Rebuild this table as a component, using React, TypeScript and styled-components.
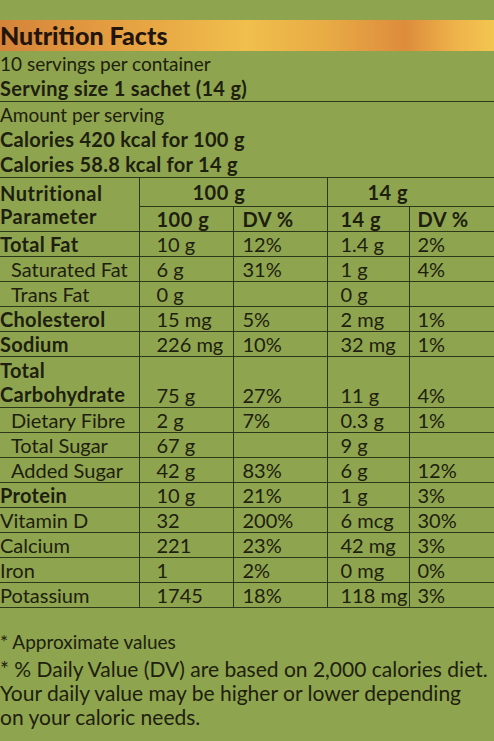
import React from "react";
import styled, { createGlobalStyle } from "styled-components";

const Global = createGlobalStyle`
  html, body { margin: 0; padding: 0; background: #8fa44e; }
  body { font-family: Lato, "Noto Sans", sans-serif; color: #1d200f; }
`;

const Page = styled.div`
  width: 494px;
  min-height: 741px;
  background: #8fa44e;
  padding-top: 20px;
  box-sizing: border-box;
  overflow: hidden;
`;

const TitleBand = styled.h1`
  margin: 0;
  height: 31px;
  line-height: 31px;
  font-size: 25px;
  font-weight: 900;
  color: #24150c;
  white-space: nowrap;
  background: linear-gradient(
    90deg,
    #d4843a 0%,
    #e39a40 20%,
    #f0bf4c 50%,
    #e8ab45 66%,
    #dd8c3c 82%,
    #eeb24a 92%,
    #f3c650 100%
  );
`;

const Line = styled.div<{ $bold?: boolean }>`
  height: 25px;
  line-height: 25px;
  font-size: ${(p) => (p.$bold ? 20 : 19)}px;
  letter-spacing: ${(p) => (p.$bold ? 0.3 : 0)}px;
  font-weight: ${(p) => (p.$bold ? 700 : 400)};
  white-space: nowrap;
`;

const Section = styled.div<{ $divider?: boolean }>`
  border-bottom: ${(p) => (p.$divider ? "1px solid #2d381a" : "none")};
`;

const Table = styled.table`
  width: 100%;
  border-collapse: collapse;
  table-layout: fixed;
  font-size: 20px;
  border-top: 1px solid #2d381a;
  border-bottom: 1px solid #2d381a;
`;

const Cell = styled.td<{ $bold?: boolean; $indent?: boolean; $pad?: number; $bottom?: boolean }>`
  height: 24px;
  padding: 0 0 0 ${(p) => (p.$indent ? 11 : p.$pad ?? 0)}px;
  line-height: 24px;
  font-weight: ${(p) => (p.$bold ? 700 : 400)};
  letter-spacing: ${(p) => (p.$bold ? 0.3 : 0)}px;
  border: 1px solid #2d381a;
  white-space: nowrap;
  overflow: visible;
  vertical-align: ${(p) => (p.$bottom ? "bottom" : "middle")};
  &:first-child { border-left: none; }
  &:last-child { border-right: none; }
`;

const HeadCell = styled.th<{ $pad?: number; $tall?: boolean }>`
  padding: 0 0 0 ${(p) => p.$pad ?? 0}px;
  height: ${(p) => (p.$tall ? 28 : 24)}px;
  font-weight: 700;
  letter-spacing: 0.5px;
  text-align: left;
  line-height: 23px;
  border: 1px solid #2d381a;
  vertical-align: middle;
  white-space: nowrap;
  &:first-child { border-left: none; }
  &:last-child { border-right: none; }
`;

const Footer = styled.div`
  padding-top: 22px;
  line-height: 24px;
`;

const Note = styled.p<{ $small?: boolean }>`
  margin: 0 0 3px 0;
  font-size: ${(p) => (p.$small ? 19 : 21)}px;
  white-space: nowrap;
`;

type Row = {
  name: string;
  v: [string, string, string, string];
  bold?: boolean;
  indent?: boolean;
  twoLine?: boolean;
};

const rows: Row[] = [
  { name: "Total Fat", v: ["10 g", "12%", "1.4 g", "2%"], bold: true },
  { name: "Saturated Fat", v: ["6 g", "31%", "1 g", "4%"], indent: true },
  { name: "Trans Fat", v: ["0 g", "", "0 g", ""], indent: true },
  { name: "Cholesterol", v: ["15 mg", "5%", "2 mg", "1%"], bold: true },
  { name: "Sodium", v: ["226 mg", "10%", "32 mg", "1%"], bold: true },
  { name: "Total Carbohydrate", v: ["75 g", "27%", "11 g", "4%"], bold: true, twoLine: true },
  { name: "Dietary Fibre", v: ["2 g", "7%", "0.3 g", "1%"], indent: true },
  { name: "Total Sugar", v: ["67 g", "", "9 g", ""], indent: true },
  { name: "Added Sugar", v: ["42 g", "83%", "6 g", "12%"], indent: true },
  { name: "Protein", v: ["10 g", "21%", "1 g", "3%"], bold: true },
  { name: "Vitamin D", v: ["32", "200%", "6 mcg", "30%"] },
  { name: "Calcium", v: ["221", "23%", "42 mg", "3%"] },
  { name: "Iron", v: ["1", "2%", "0 mg", "0%"] },
  { name: "Potassium", v: ["1745", "18%", "118 mg", "3%"] },
];

const pads = [17, 9, 13, 8];

export default function App() {
  return (
    <Page>
      <Global />
      <TitleBand>Nutrition Facts</TitleBand>
      <Section $divider>
        <Line>10 servings per container</Line>
        <Line $bold>Serving size 1 sachet (14 g)</Line>
      </Section>
      <Section>
        <Line>Amount per serving</Line>
        <Line $bold>Calories 420 kcal for 100 g</Line>
        <Line $bold>Calories 58.8 kcal for 14 g</Line>
      </Section>
      <Table>
        <colgroup>
          <col style={{ width: 139 }} />
          <col style={{ width: 94 }} />
          <col style={{ width: 94 }} />
          <col style={{ width: 82 }} />
          <col />
        </colgroup>
        <thead>
          <tr>
            <HeadCell rowSpan={2}>
              Nutritional
              <br />
              Parameter
            </HeadCell>
            <HeadCell colSpan={2} $pad={53} $tall>
              100 g
            </HeadCell>
            <HeadCell colSpan={2} $pad={40} $tall>
              14 g
            </HeadCell>
          </tr>
          <tr>
            <HeadCell $pad={pads[0]}>100 g</HeadCell>
            <HeadCell $pad={pads[1]}>DV %</HeadCell>
            <HeadCell $pad={pads[2]}>14 g</HeadCell>
            <HeadCell $pad={pads[3]}>DV %</HeadCell>
          </tr>
        </thead>
        <tbody>
          {rows.map((r) => (
            <tr key={r.name}>
              <Cell $bold={r.bold} $indent={r.indent} style={r.twoLine ? { height: 50 } : undefined}>
                {r.twoLine ? (
                  <>
                    Total
                    <br />
                    Carbohydrate
                  </>
                ) : (
                  r.name
                )}
              </Cell>
              {r.v.map((val, i) => (
                <Cell key={i} $pad={pads[i]} $bottom={r.twoLine}>
                  {val}
                </Cell>
              ))}
            </tr>
          ))}
        </tbody>
      </Table>
      <Footer>
        <Note $small>* Approximate values</Note>
        <Note>
          * % Daily Value (DV) are based on 2,000 calories diet.
          <br />
          Your daily value may be higher or lower depending
          <br />
          on your caloric needs.
        </Note>
      </Footer>
    </Page>
  );
}
